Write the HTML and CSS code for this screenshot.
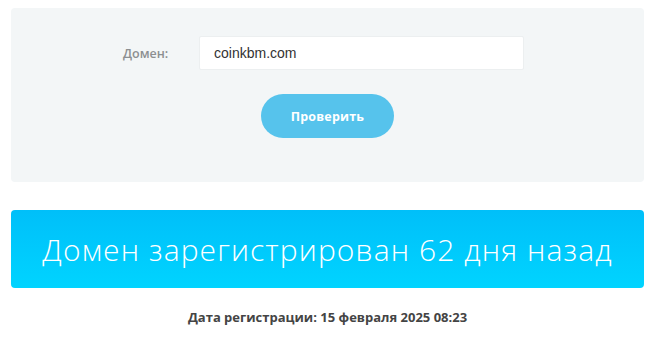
FILE: index.html
```html
<!DOCTYPE html>
<html lang="ru">
<head>
<meta charset="utf-8">
<link rel="stylesheet" href="styles.css">
</head>
<body>
<div class="page">
  <form class="panel">
    <div class="row">
      <label class="label" for="domain">Домен:</label>
      <input class="input" id="domain" type="text" value="coinkbm.com">
    </div>
    <button class="btn" type="button">Проверить</button>
  </form>
  <div class="banner">Домен зарегистрирован 62 дня назад</div>
  <p class="date">Дата регистрации: 15 февраля 2025 08:23</p>
</div>
</body>
</html>
```

FILE: styles.css
```css
html, body {
  margin: 0;
  padding: 0;
  background: #ffffff;
}
.page {
  padding: 8px 10px 0 11px;
  font-family: "Open Sans", "Liberation Sans", sans-serif;
}
.panel {
  margin: 0;
  height: 174px;
  box-sizing: border-box;
  background: #f3f6f7;
  border-radius: 4px;
  padding-top: 28px;
  display: flex;
  flex-direction: column;
  align-items: center;
}
.row {
  display: flex;
  align-items: center;
  width: 401px;
  margin-left: -8px;
}
.label {
  width: 76px;
  font-size: 12.5px;
  font-weight: 600;
  color: #8c8f91;
}
.input {
  width: 325px;
  height: 34px;
  box-sizing: border-box;
  border: 1px solid #eceff0;
  border-radius: 2px;
  background: #fff;
  padding: 0 14px;
  font-family: "Liberation Sans", Arial, sans-serif;
  font-size: 14px;
  color: #333;
  outline: none;
}
.btn {
  margin-top: 24px;
  width: 133px;
  height: 44px;
  border: none;
  border-radius: 22px;
  background: #56c3ec;
  color: #fff;
  font-family: "Open Sans", sans-serif;
  font-weight: 700;
  font-size: 12.5px;
  letter-spacing: 0.2px;
  padding: 0;
}
.banner {
  margin-top: 28px;
  height: 78px;
  border-radius: 4px;
  background: linear-gradient(to bottom, #00bff9, #00d4ff);
  color: #fff;
  font-size: 30px;
  font-weight: 300;
  letter-spacing: 1.1px;
  display: flex;
  align-items: center;
  justify-content: center;
}
.date {
  margin: 20px 0 0;
  text-align: center;
  font-size: 13px;
  font-weight: 700;
  color: #444;
}
```
